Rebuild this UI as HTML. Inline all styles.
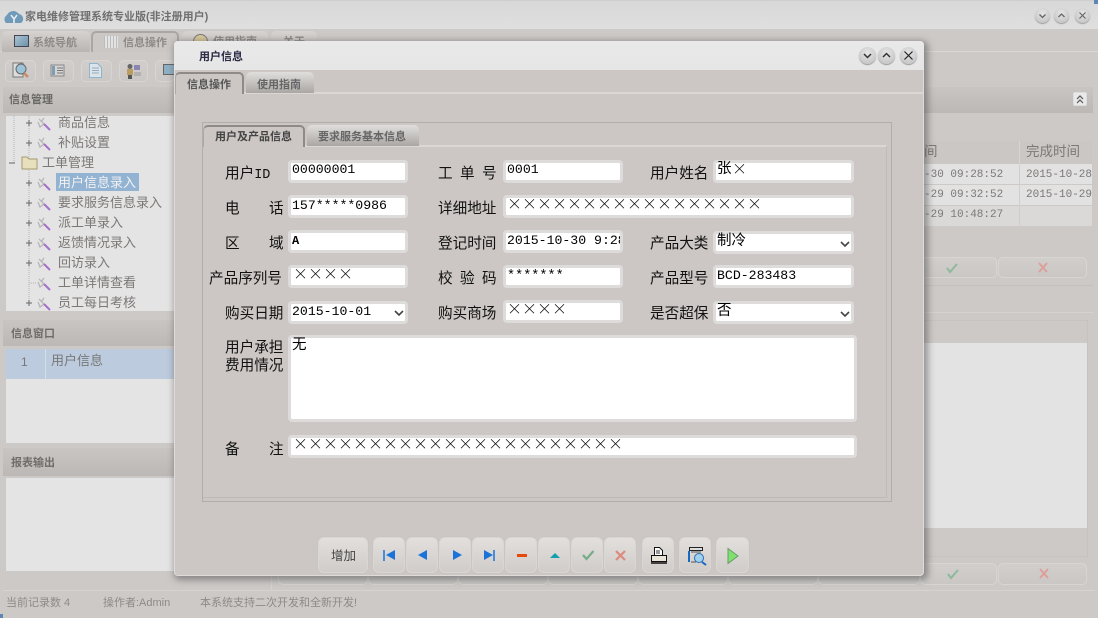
<!DOCTYPE html>
<html><head><meta charset="utf-8">
<style>
html,body{margin:0;padding:0;width:1098px;height:618px;overflow:hidden;background:#cdc9c7}
*{box-sizing:border-box}
body{font-family:"Liberation Sans","WenQuanYi Zen Hei","Noto Sans CJK SC",sans-serif;font-size:13px;position:relative}
.a{position:absolute}
.t{position:absolute;white-space:nowrap;line-height:18px;height:18px}
.g{color:#7b7876}
.gl{color:#8d8a88}
.l{color:#111;font-size:14.6px}
.l span{font-family:"Liberation Mono",monospace;font-size:13.500px}
.m{font-family:"Liberation Mono","WenQuanYi Zen Hei",monospace;font-size:13.200px;color:#000}
.x{font-family:"Noto Sans CJK SC",sans-serif;font-size:15px;color:#000;letter-spacing:0;line-height:15px;font-weight:300}
.f{position:absolute;background:#fff;border:3px solid #dedcdb;border-radius:4px}
.btn{position:absolute;top:537px;height:36px;border:1px solid #d9d6d3;border-radius:6px;background:linear-gradient(#e2dfdc,#d0ccc9);box-shadow:0 0 0 1px #c9c5c2}
.btn svg{position:absolute;left:0;top:0}
.bb{position:absolute;background:linear-gradient(#d1cecc,#cac7c5);border:1px solid #d8d5d3;border-radius:5px}
.hd{position:absolute;background:linear-gradient(#c9c5c3,#bcb8b6)}
.tab{position:absolute;border-radius:5px 5px 0 0;text-align:center}
.rb{position:absolute;width:20px;height:20px;border-radius:50%;background:radial-gradient(circle at 50% 35%,#e6e6e6,#bdbdbd);box-shadow:0 1px 1px #999}
.rb svg{position:absolute;left:0;top:0}
</style></head><body>

<!-- background window -->
<div class="a" style="left:0;top:0;width:1098px;height:29px;background:linear-gradient(#d8d8d8,#dfdfdf);border-top:1px solid #cfcfcf"></div>
<div class="a" style="left:1094px;top:0;width:4px;height:4px;background:#5d86b5"></div>
<div class="a" style="left:0;top:614px;width:3px;height:4px;background:#5d86b5"></div>
<svg class="a" style="left:4px;top:9px" width="20" height="16"><path d="M2 14a5 5 0 0 1 1-8a7 7 0 0 1 12-1a5 5 0 0 1 2 9z" fill="#6f9ab8"/><path d="M7 6l3 4l3-4M10 10v4" stroke="#e4ecf2" stroke-width="1.6" fill="none"/></svg>
<div class="t" style="left:25px;top:8px;color:#6f6f6f;font-size:11px;font-weight:bold">家电维修管理系统专业版(非注册用户)</div>
<div class="rb" style="left:1035px;top:8px;width:15px;height:15px"><svg width="15" height="15"><path d="M4.500 6.500l3 3l3-3" stroke="#666" stroke-width="1.300" fill="none"/></svg></div>
<div class="rb" style="left:1054px;top:8px;width:15px;height:15px"><svg width="15" height="15"><path d="M4.500 9l3-3l3 3" stroke="#666" stroke-width="1.300" fill="none"/></svg></div>
<div class="rb" style="left:1075px;top:8px;width:15px;height:15px"><svg width="15" height="15"><path d="M4.500 4.500l6 6M10.500 4.500l-6 6" stroke="#666" stroke-width="1.200" fill="none"/></svg></div>

<div class="a" style="left:0;top:51px;width:1098px;height:1px;background:#dad7d5"></div>
<div class="tab" style="left:2px;top:31px;width:88px;height:21px;background:linear-gradient(#d6d3d1,#b9b5b3)"></div>
<div class="a" style="left:14px;top:35px;width:15px;height:12px;background:linear-gradient(135deg,#a9c4d4,#6f93a8);border:1px solid #445"></div>
<div class="t gl" style="left:33px;top:34px;font-size:11px;font-weight:bold">系统导航</div>
<div class="tab" style="left:91px;top:31px;width:88px;height:21px;background:#cbc7c5;border:2px solid #aaa6a4;border-bottom:0"></div>
<div class="a" style="left:104px;top:36px;width:14px;height:12px;background:repeating-linear-gradient(90deg,#bbb 0 1px,#e4e4e4 1px 3px)"></div>
<div class="t gl" style="left:123px;top:34px;font-size:11px;font-weight:bold">信息操作</div>
<div class="tab" style="left:182px;top:31px;width:86px;height:21px;background:linear-gradient(#d6d3d1,#c4c0be)"></div>
<div class="a" style="left:193px;top:34px;width:15px;height:15px;border-radius:50%;background:#d8c99a;border:1px solid #777"></div>
<div class="t gl" style="left:213px;top:33px;font-size:11px;font-weight:bold">使用指南</div>
<div class="tab" style="left:271px;top:31px;width:46px;height:21px;background:linear-gradient(#d6d3d1,#c4c0be)"></div>
<div class="t gl" style="left:283px;top:33px;font-size:11px;font-weight:bold">关于</div>

<!-- toolbar -->
<div class="bb" style="left:5px;top:60px;width:31px;height:22px"></div>
<svg class="a" style="left:12px;top:61px" width="18" height="19"><rect x="1" y="2" width="10" height="14" fill="#ddd" stroke="#777"/><circle cx="9" cy="8" r="5" fill="#9cc3d8" stroke="#666"/><path d="M12 12l4 4" stroke="#c88a62" stroke-width="2.400"/></svg>
<div class="bb" style="left:43px;top:60px;width:31px;height:22px"></div>
<svg class="a" style="left:50px;top:63px" width="16" height="15"><rect x="1" y="2" width="13" height="11" fill="#d5d5d5" stroke="#888"/><rect x="2" y="3" width="3" height="9" fill="#7f9fb0"/><path d="M7 5h6M7 7.500h6M7 10h6" stroke="#777"/></svg>
<div class="bb" style="left:81px;top:60px;width:31px;height:22px"></div>
<svg class="a" style="left:88px;top:62px" width="15" height="17"><path d="M1.500 1.500h8l4 4v10h-12z" fill="#dbe4ea" stroke="#8fb4cc"/><path d="M4 6h7M4 8.500h7M4 11h7" stroke="#9ab"/></svg>
<div class="bb" style="left:119px;top:60px;width:29px;height:22px"></div>
<svg class="a" style="left:125px;top:63px" width="17" height="17"><circle cx="5" cy="3.500" r="2.500" fill="#666"/><rect x="2" y="6" width="6" height="6" fill="#b99c62"/><rect x="3" y="12" width="4" height="4" fill="#555"/><rect x="9" y="2" width="6" height="5" fill="#8a86b0"/><path d="M9 10h7M9 12h7" stroke="#999"/></svg>
<div class="bb" style="left:155px;top:60px;width:20px;height:22px"></div>
<div class="a" style="left:163px;top:64px;width:12px;height:11px;background:#8fb0c4;border:1px solid #666"></div>

<!-- left panels -->
<div class="hd" style="left:3px;top:87px;width:1090px;height:26px"></div>
<div class="t" style="left:9px;top:91px;font-size:11px;font-weight:bold;color:#6a6866">信息管理</div>
<div class="a" style="left:1073px;top:92px;width:14px;height:14px;background:#e9e9e9;border:1px solid #ddd;border-radius:2px"></div>
<svg class="a" style="left:1073px;top:92px" width="14" height="14"><path d="M4 7l3-3l3 3M4 11l3-3l3 3" stroke="#555" stroke-width="1.200" fill="none"/></svg>

<div class="a" style="left:6px;top:116px;width:168px;height:195px;background:#e4e4e4"></div>
<svg class="a" style="left:6px;top:116px" width="60" height="195">
<path d="M8 0V48M23 0V190M23 7h4M23 27h4M23 67h4M23 87h4M23 107h4M23 127h4M23 147h4M23 167h8M23 187h4" stroke="#b5b5b5" stroke-dasharray="1 1" fill="none"/>
<g stroke="#666"><path d="M20 7h6M23 4v6M20 27h6M23 24v6M3 47h6M20 67h6M23 64v6M20 87h6M23 84v6M20 107h6M23 104v6M20 127h6M23 124v6M20 147h6M23 144v6M20 187h6M23 184v6"/></g>
<g fill="none"><path d="M33 3l5 5l-4 3l-2-5M38 2l-3 4" stroke="#b8b8b8" stroke-width="1.400"/><path d="M38 8l6 6" stroke="#a66fc8" stroke-width="2"/>
<path d="M33 23l5 5l-4 3l-2-5M38 22l-3 4" stroke="#b8b8b8" stroke-width="1.400"/><path d="M38 28l6 6" stroke="#a66fc8" stroke-width="2"/>
<path d="M33 63l5 5l-4 3l-2-5M38 62l-3 4" stroke="#b8b8b8" stroke-width="1.400"/><path d="M38 68l6 6" stroke="#a66fc8" stroke-width="2"/>
<path d="M33 83l5 5l-4 3l-2-5M38 82l-3 4" stroke="#b8b8b8" stroke-width="1.400"/><path d="M38 88l6 6" stroke="#a66fc8" stroke-width="2"/>
<path d="M33 103l5 5l-4 3l-2-5M38 102l-3 4" stroke="#b8b8b8" stroke-width="1.400"/><path d="M38 108l6 6" stroke="#a66fc8" stroke-width="2"/>
<path d="M33 123l5 5l-4 3l-2-5M38 122l-3 4" stroke="#b8b8b8" stroke-width="1.400"/><path d="M38 128l6 6" stroke="#a66fc8" stroke-width="2"/>
<path d="M33 143l5 5l-4 3l-2-5M38 142l-3 4" stroke="#b8b8b8" stroke-width="1.400"/><path d="M38 148l6 6" stroke="#a66fc8" stroke-width="2"/>
<path d="M33 163l5 5l-4 3l-2-5M38 162l-3 4" stroke="#b8b8b8" stroke-width="1.400"/><path d="M38 168l6 6" stroke="#a66fc8" stroke-width="2"/>
<path d="M33 183l5 5l-4 3l-2-5M38 182l-3 4" stroke="#b8b8b8" stroke-width="1.400"/><path d="M38 188l6 6" stroke="#a66fc8" stroke-width="2"/></g>
<path d="M16 41h5l2 2h8v10h-15z" fill="#e8e0bc" stroke="#a49a72"/>
</svg>
<div class="t g" style="left:58px;top:114px">商品信息</div>
<div class="t g" style="left:58px;top:134px">补贴设置</div>
<div class="t g" style="left:42px;top:154px">工单管理</div>
<div class="a" style="left:56px;top:173px;width:83px;height:18px;background:#93b3d3"></div>
<div class="t" style="left:58px;top:174px;color:#f2f2f2">用户信息录入</div>
<div class="t g" style="left:58px;top:194px">要求服务信息录入</div>
<div class="t g" style="left:58px;top:214px">派工单录入</div>
<div class="t g" style="left:58px;top:234px">返馈情况录入</div>
<div class="t g" style="left:58px;top:254px">回访录入</div>
<div class="t g" style="left:58px;top:274px">工单详情查看</div>
<div class="t g" style="left:58px;top:294px">员工每日考核</div>

<div class="hd" style="left:3px;top:320px;width:172px;height:26px"></div>
<div class="t" style="left:11px;top:325px;font-size:11px;font-weight:bold;color:#6f6d6b">信息窗口</div>
<div class="a" style="left:6px;top:349px;width:168px;height:94px;background:#e4e4e4"></div>
<div class="a" style="left:6px;top:349px;width:168px;height:30px;background:#bccbdd"></div>
<div class="a" style="left:45px;top:349px;width:1px;height:30px;background:#d5dde8"></div>
<div class="t" style="left:21px;top:353px;font-size:12px;color:#777">1</div>
<div class="t" style="left:51px;top:352px;font-size:13px;color:#777">用户信息</div>

<div class="hd" style="left:3px;top:448px;width:172px;height:28px"></div>
<div class="t" style="left:11px;top:454px;font-size:11px;font-weight:bold;color:#6f6d6b">报表输出</div>
<div class="a" style="left:6px;top:478px;width:168px;height:93px;background:#e4e4e4"></div>

<!-- lower strip behind dialog -->
<div class="a" style="left:271px;top:570px;width:1px;height:20px;background:#d6d3d1"></div>
<div class="bb" style="left:278px;top:563px;width:90px;height:22px"></div>
<div class="bb" style="left:368px;top:563px;width:90px;height:22px"></div>
<div class="bb" style="left:458px;top:563px;width:90px;height:22px"></div>
<div class="bb" style="left:548px;top:563px;width:90px;height:22px"></div>
<div class="bb" style="left:638px;top:563px;width:90px;height:22px"></div>
<div class="bb" style="left:728px;top:563px;width:90px;height:22px"></div>
<div class="bb" style="left:818px;top:563px;width:102px;height:22px"></div>

<!-- status -->
<div class="a" style="left:3px;top:590px;width:1092px;height:1px;background:#d6d3d1"></div>
<div class="t gl" style="left:6px;top:594px;font-size:11px">当前记录数 4</div>
<div class="t gl" style="left:103px;top:594px;font-size:11px">操作者:Admin</div>
<div class="t gl" style="left:200px;top:594px;font-size:11px">本系统支持二次开发和全新开发!</div>

<!-- right side background -->
<div class="a" style="left:924px;top:141px;width:168px;height:23px;background:#cbc7c5"></div>
<div class="a" style="left:1019px;top:141px;width:1px;height:84px;background:#d8d5d3"></div>
<div class="t g" style="left:924px;top:143px;font-size:13.500px">间</div>
<div class="t g" style="left:1026px;top:143px;font-size:13.500px">完成时间</div>
<div class="a" style="left:924px;top:164px;width:168px;height:20px;background:#e2e2e2"></div>
<div class="a" style="left:924px;top:185px;width:168px;height:20px;background:#e2e2e2"></div>
<div class="a" style="left:924px;top:206px;width:168px;height:20px;background:#dbd9d8"></div>
<div class="a" style="left:1019px;top:164px;width:1px;height:62px;background:#d0cdcb"></div>
<div class="t g" style="left:924px;top:166px;font-family:'Liberation Mono',monospace;font-size:11px">-30 09:28:52</div>
<div class="t g" style="left:1026px;top:166px;font-family:'Liberation Mono',monospace;font-size:11px">2015-10-28</div>
<div class="t g" style="left:924px;top:186px;font-family:'Liberation Mono',monospace;font-size:11px">-29 09:32:52</div>
<div class="t g" style="left:1026px;top:186px;font-family:'Liberation Mono',monospace;font-size:11px">2015-10-29</div>
<div class="t g" style="left:924px;top:206px;font-family:'Liberation Mono',monospace;font-size:11px">-29 10:48:27</div>
<div class="bb" style="left:920px;top:257px;width:77px;height:21px"></div>
<div class="bb" style="left:998px;top:257px;width:89px;height:21px"></div>
<svg class="a" style="left:945px;top:261px" width="14" height="13"><path d="M2 7l3 4l7-8" stroke="#8db99c" stroke-width="2" fill="none"/></svg>
<svg class="a" style="left:1036px;top:261px" width="14" height="13"><path d="M3 2l8 9M11 2l-8 9" stroke="#dd9f98" stroke-width="2" fill="none"/></svg>
<div class="a" style="left:920px;top:285px;width:173px;height:1px;background:#c4c0be"></div>
<div class="a" style="left:920px;top:312px;width:173px;height:1px;background:#d6d3d1"></div>
<div class="a" style="left:920px;top:320px;width:168px;height:237px;border-right:1px solid #c6c2c0;border-top:1px solid #c6c2c0;border-bottom:1px solid #c6c2c0"></div>
<div class="a" style="left:920px;top:343px;width:167px;height:185px;background:#e3e3e3"></div>
<div class="bb" style="left:920px;top:563px;width:77px;height:22px"></div>
<div class="bb" style="left:998px;top:563px;width:89px;height:22px"></div>
<svg class="a" style="left:946px;top:567px" width="14" height="13"><path d="M2 7l3 4l7-8" stroke="#8db99c" stroke-width="2" fill="none"/></svg>
<svg class="a" style="left:1037px;top:567px" width="14" height="13"><path d="M3 2l8 9M11 2l-8 9" stroke="#dd9f98" stroke-width="2" fill="none"/></svg>

<!-- dialog -->
<div class="a" style="left:174px;top:41px;width:750px;height:535px;background:#ccc7c4;border-radius:4px;box-shadow:2px 2px 7px 2px rgba(70,70,70,.5);border-right:1px solid #dedbd9;border-bottom:1px solid #dedbd9;border-left:1px solid #dedbd9"></div>
<div class="a" style="left:174px;top:41px;width:750px;height:29px;background:linear-gradient(#e9e9e9,#e6e6e6);border-radius:4px 4px 0 0"></div>
<div class="t" style="left:199px;top:48px;font-size:11px;font-weight:bold;color:#2a2a45">用户信息</div>
<div class="rb" style="left:859px;top:47px;width:17px;height:17px"><svg width="17" height="17"><path d="M5 7l3.500 3.500l3.500-3.500" stroke="#333" stroke-width="1.500" fill="none"/></svg></div>
<div class="rb" style="left:878px;top:47px;width:17px;height:17px"><svg width="17" height="17"><path d="M5 10l3.500-3.500l3.500 3.500" stroke="#333" stroke-width="1.500" fill="none"/></svg></div>
<div class="rb" style="left:900px;top:47px;width:17px;height:17px"><svg width="17" height="17"><path d="M4.500 4.500l8 8M12.500 4.500l-8 8" stroke="#222" stroke-width="1.200" fill="none"/></svg></div>

<div class="a" style="left:175px;top:92px;width:748px;height:2px;background:#dad7d4"></div>
<div class="tab" style="left:175px;top:72px;width:69px;height:22px;background:#ccc7c4;border:2px solid #8f8a88;border-bottom:0;border-left:1px solid #aaa"></div>
<div class="t" style="left:187px;top:76px;font-size:11px;font-weight:bold;color:#555">信息操作</div>
<div class="tab" style="left:246px;top:72px;width:68px;height:21px;background:linear-gradient(#e0dedc,#aaa6a4)"></div>
<div class="t" style="left:257px;top:76px;font-size:11px;font-weight:bold;color:#666">使用指南</div>

<div class="a" style="left:202px;top:122px;width:690px;height:380px;border:1px solid #b3adaa"></div>
<div class="a" style="left:203px;top:145px;width:684px;height:353px;border-top:2px solid #dad7d4;border-right:1px solid #c0bbb8;border-bottom:1px solid #bfbab7"></div>
<div class="tab" style="left:203px;top:125px;width:102px;height:22px;background:#ccc7c4;border:2px solid #8f8a88;border-bottom:0;border-left:1px solid #aaa"></div>
<div class="t" style="left:215px;top:128px;font-size:11px;font-weight:bold;color:#444">用户及产品信息</div>
<div class="tab" style="left:307px;top:125px;width:112px;height:21px;background:linear-gradient(#e0dedc,#aaa6a4)"></div>
<div class="t" style="left:318px;top:128px;font-size:11px;font-weight:bold;color:#666">要求服务基本信息</div>

<!-- fields -->
<div class="f" style="left:288px;top:160px;width:120px;height:23px"></div>
<div class="f" style="left:503px;top:160px;width:120px;height:23px"></div>
<div class="f" style="left:713px;top:160px;width:141px;height:23px"></div>
<div class="f" style="left:288px;top:195px;width:120px;height:23px"></div>
<div class="f" style="left:503px;top:195px;width:351px;height:23px"></div>
<div class="f" style="left:288px;top:230px;width:120px;height:23px"></div>
<div class="f" style="left:503px;top:230px;width:120px;height:23px"></div>
<div class="f" style="left:713px;top:231px;width:141px;height:23px"></div>
<div class="f" style="left:288px;top:265px;width:120px;height:23px"></div>
<div class="f" style="left:503px;top:265px;width:120px;height:23px"></div>
<div class="f" style="left:713px;top:265px;width:141px;height:23px"></div>
<div class="f" style="left:288px;top:301px;width:120px;height:23px"></div>
<div class="f" style="left:503px;top:300px;width:120px;height:23px"></div>
<div class="f" style="left:713px;top:301px;width:141px;height:23px"></div>
<div class="f" style="left:288px;top:335px;width:569px;height:87px"></div>
<div class="f" style="left:288px;top:435px;width:569px;height:23px"></div>

<!-- labels -->
<div class="t l" style="left:225px;top:165px">用户<span>ID</span></div>
<div class="t l" style="left:225px;top:200px">电</div><div class="t l" style="left:269px;top:200px">话</div>
<div class="t l" style="left:225px;top:235px">区</div><div class="t l" style="left:269px;top:235px">域</div>
<div class="t l" style="left:209px;top:270px">产品序列号</div>
<div class="t l" style="left:225px;top:305px">购买日期</div>
<div class="t l" style="left:225px;top:339px">用户承担</div>
<div class="t l" style="left:225px;top:357px">费用情况</div>
<div class="t l" style="left:225px;top:441px">备</div><div class="t l" style="left:269px;top:441px">注</div>

<div class="t l" style="left:438px;top:165px">工</div><div class="t l" style="left:460px;top:165px">单</div><div class="t l" style="left:482px;top:165px">号</div>
<div class="t l" style="left:438px;top:200px">详细地址</div>
<div class="t l" style="left:438px;top:235px">登记时间</div>
<div class="t l" style="left:438px;top:270px">校</div><div class="t l" style="left:460px;top:270px">验</div><div class="t l" style="left:482px;top:270px">码</div>
<div class="t l" style="left:438px;top:305px">购买商场</div>

<div class="t l" style="left:650px;top:165px">用户姓名</div>
<div class="t l" style="left:650px;top:235px">产品大类</div>
<div class="t l" style="left:650px;top:270px">产品型号</div>
<div class="t l" style="left:650px;top:305px">是否超保</div>

<!-- values -->
<div class="t m" style="left:292px;top:161px">00000001</div>
<div class="t m" style="left:507px;top:161px">0001</div>
<div class="t m" style="left:717px;top:161px;font-size:14.500px">张</div>
<div class="t x" style="left:732px;top:161px">×</div>
<div class="t m" style="left:292px;top:197px">157*****0986</div>
<div class="t x" style="left:507px;top:196px">×××××××××××××××××</div>
<div class="t m" style="left:292px;top:232px;font-size:12px;font-weight:bold">A</div>
<div class="t m" style="left:507px;top:232px;width:113px;overflow:hidden">2015-10-30 9:28</div>
<div class="t m" style="left:717px;top:233px;font-size:14.500px">制冷</div>
<div class="t x" style="left:293px;top:266px">××××</div>
<div class="t m" style="left:507px;top:268px;font-size:13.500px">*******</div>
<div class="t m" style="left:717px;top:267px">BCD-283483</div>
<div class="t m" style="left:292px;top:303px">2015-10-01</div>
<div class="t x" style="left:507px;top:301px">××××</div>
<div class="t m" style="left:717px;top:303px;font-size:14.500px">否</div>
<div class="t m" style="left:292px;top:337px;font-size:14.500px">无</div>
<div class="t x" style="left:293px;top:436px">××××××××××××××××××××××</div>

<svg class="a" style="left:0;top:0" width="1098" height="618">
<g fill="none" stroke="#444" stroke-width="1.600"><path d="M395 311l4 4l4-4M841 242l4 4l4-4M841 312l4 4l4-4"/></g>
</svg>

<!-- bottom buttons -->
<div class="btn" style="left:318px;width:50px"></div>
<div class="t" style="left:331px;top:547px;font-size:12.500px;color:#444">增加</div>
<div class="btn" style="left:373px;width:32px"><svg width="32" height="36"><path d="M10 12v11" stroke="#1a73d9" stroke-width="1.500"/><path d="M21 12v10l-9-5z" fill="#1a73d9"/></svg></div>
<div class="btn" style="left:406px;width:32px"><svg width="32" height="36"><path d="M20 12v10l-9-5z" fill="#1a73d9"/></svg></div>
<div class="btn" style="left:439px;width:32px"><svg width="32" height="36"><path d="M13 12v10l9-5z" fill="#1a73d9"/></svg></div>
<div class="btn" style="left:472px;width:32px"><svg width="32" height="36"><path d="M11 12v10l9-5z" fill="#1a73d9"/><path d="M21 12v11" stroke="#1a73d9" stroke-width="1.500"/></svg></div>
<div class="btn" style="left:505px;width:32px"><svg width="32" height="36"><rect x="11" y="16" width="10" height="3" fill="#e64a0a"/></svg></div>
<div class="btn" style="left:538px;width:32px"><svg width="32" height="36"><path d="M11 20l5-5l5 5z" fill="#12a0ae"/></svg></div>
<div class="btn" style="left:571px;width:32px"><svg width="32" height="36"><path d="M11 17l3.500 4l7-8" stroke="#76ad88" stroke-width="2.200" fill="none"/></svg></div>
<div class="btn" style="left:604px;width:32px"><svg width="32" height="36"><path d="M11 13l9 9M20 13l-9 9" stroke="#dc8a80" stroke-width="2.200" fill="none"/></svg></div>
<div class="btn" style="left:642px;width:32px"><svg width="32" height="36"><path d="M11.500 9.500h5l3 3v5h-8z" fill="#fff" stroke="#111"/><path d="M13 13h4M13 15h4" stroke="#333"/><path d="M8.500 17.500h15v6h-15z" fill="#e8e4d8" stroke="#111"/><path d="M8 25h16" stroke="#111" stroke-width="1.500"/></svg></div>
<div class="btn" style="left:679px;width:32px"><svg width="32" height="36"><rect x="9.500" y="9.500" width="13" height="3" fill="#ddd" stroke="#222"/><rect x="8" y="13" width="2" height="11" fill="#1769c4"/><path d="M11 14h10M11 24h5" stroke="#555"/><circle cx="19" cy="20" r="4.500" fill="#9ed0f0" stroke="#2a6fb0"/><path d="M22 24l4 3" stroke="#1769c4" stroke-width="2"/></svg></div>
<div class="btn" style="left:716px;width:33px"><svg width="33" height="36"><path d="M11 10.500v15l10-7.500z" fill="#7ee06e" stroke="#6a9a6a"/></svg></div>
</body></html>
